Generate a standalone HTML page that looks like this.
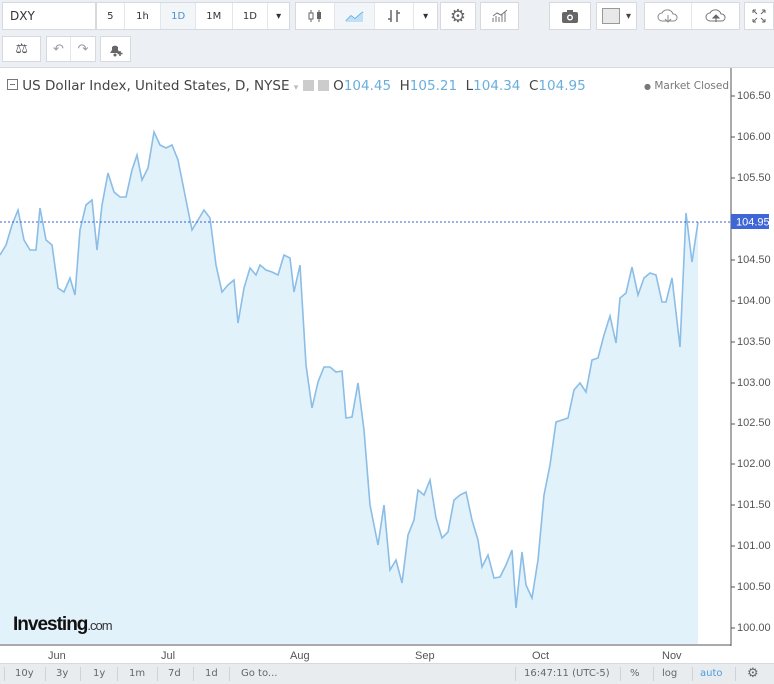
<!DOCTYPE html>
<html><head><meta charset="utf-8"><style>
*{box-sizing:border-box;margin:0;padding:0}
body{width:774px;height:684px;background:#eceff3;font-family:"DejaVu Sans","Liberation Sans",sans-serif;position:relative;overflow:hidden;color:#333}
.b{position:absolute;background:#fff;border:1px solid #d6dadf;display:flex;align-items:center;justify-content:center;font-size:10px;color:#444}
.grp{position:absolute;background:#fff;border:1px solid #d6dadf;display:flex}
.grp div{border-right:1px solid #e3e6ea;display:flex;align-items:center;justify-content:center;font-size:10px;height:100%}
.grp div:last-child{border-right:none}
#panel{position:absolute;left:0;top:67px;width:774px;height:597px;background:#fff;border-top:1px solid #d6dadf}
.lab{position:absolute;left:737px;font-size:11px;color:#555;font-family:"Liberation Sans",sans-serif}
.tl{position:absolute;top:650px;font-size:11px;color:#555;font-family:"Liberation Sans",sans-serif}
#bot{position:absolute;left:0;top:663px;width:774px;height:21px;background:#e9ecef;border-top:1px solid #d6dadf;font-size:10px;color:#666}
#bot span{position:absolute;top:4px}
.sep{position:absolute;top:3px;width:1px;height:14px;background:#cfd3d8}
</style></head><body>
<div class="b" style="left:2px;top:2px;width:94px;height:28px;justify-content:flex-start;padding-left:7px;font-size:12px;color:#333">DXY</div>
<div class="grp" style="left:96px;top:2px;width:194px;height:28px">
<div style="width:28px">5</div><div style="width:37px">1h</div><div style="width:35px;color:#4a90d0;background:#f3f6f9">1D</div><div style="width:37px">1M</div><div style="width:36px">1D</div><div style="width:21px">▾</div></div>
<div class="grp" style="left:295px;top:2px;width:143px;height:28px">
<div style="width:40px"><svg width="16" height="16"><path d="M4 2v12M12 2v12" stroke="#666"/><rect x="2" y="5" width="4" height="6" fill="#fff" stroke="#666"/><rect x="10" y="4" width="4" height="7" fill="#666"/></svg></div>
<div style="width:40px;background:#f3f6f9"><svg width="20" height="14"><path d="M1 12L6 7 10 10 18 3" stroke="#5aaae0" fill="none" stroke-width="1.5"/><path d="M1 12L6 7 10 10 18 3V13H1Z" fill="#bfe0f5"/></svg></div>
<div style="width:40px"><svg width="16" height="16"><path d="M5 2v12M5 11h-3M11 2v12M11 5h3" stroke="#666" stroke-width="1.5"/></svg></div><div style="width:23px">▾</div></div>
<div class="b" style="left:440px;top:2px;width:36px;height:28px;font-size:18px;color:#666">⚙</div>
<div class="b" style="left:480px;top:2px;width:39px;height:28px"><svg width="18" height="14"><path d="M2 13V9M5 13V7M8 13V8M11 13V5M14 13V3M2 7l4-3 4 2 6-5" stroke="#777" fill="none"/></svg></div>
<div class="b" style="left:549px;top:2px;width:42px;height:28px"><svg width="18" height="15"><rect x="1" y="3" width="16" height="11" rx="2" fill="#666"/><rect x="6" y="1" width="6" height="3" fill="#666"/><circle cx="9" cy="8.5" r="3" fill="#fff"/><circle cx="9" cy="8.5" r="1.6" fill="#666"/></svg></div>
<div class="b" style="left:596px;top:2px;width:41px;height:28px;justify-content:flex-start;padding-left:5px"><div style="width:18px;height:16px;background:#e8e8e8;border:1px solid #999"></div><span style="margin-left:6px">▾</span></div>
<div class="grp" style="left:644px;top:2px;width:96px;height:28px">
<div style="width:48px"><svg width="24" height="16"><path d="M6 13a4 4 0 0 1 0-8 6 6 0 0 1 11 1 3.5 3.5 0 0 1 1 7z" fill="none" stroke="#888"/><path d="M12 7v7M9 11l3 3 3-3" stroke="#888" fill="none"/></svg></div>
<div style="width:48px"><svg width="24" height="16"><path d="M6 13a4 4 0 0 1 0-8 6 6 0 0 1 11 1 3.5 3.5 0 0 1 1 7z" fill="none" stroke="#777"/><path d="M12 14V8M9 10l3-3 3 3z" stroke="#666" fill="#666"/></svg></div></div>
<div class="b" style="left:744px;top:2px;width:30px;height:28px"><svg width="14" height="14"><path d="M1 1l4 4M1 1h3M1 1v3M13 1l-4 4M13 1h-3M13 1v3M1 13l4-4M1 13h3M1 13v-3M13 13l-4-4M13 13h-3M13 13v-3" stroke="#666"/></svg></div>
<div class="b" style="left:2px;top:36px;width:39px;height:26px;font-size:14px;color:#555">⚖</div>
<div class="grp" style="left:46px;top:36px;width:50px;height:26px"><div style="width:25px;color:#999;font-size:13px">↶</div><div style="width:25px;color:#999;font-size:13px">↷</div></div>
<div class="b" style="left:100px;top:36px;width:31px;height:26px"><svg width="18" height="16"><path d="M3 12h10l-2-3V6a4 4 0 0 0-6 0v3z" fill="#666"/><circle cx="8" cy="14" r="1.5" fill="#666"/><path d="M13 10v5M10.5 12.5h5" stroke="#666" stroke-width="1.5"/></svg></div>
<div id="panel"></div>
<svg style="position:absolute;left:0;top:68px" width="774" height="596">
<line x1="731" y1="0" x2="731" y2="578" stroke="#555"/>
<line x1="0" y1="577" x2="731" y2="577" stroke="#555"/>
<path d="M0 187L6 177 12 157 18 142 24 172 30 182 36 182 40 140 46 172 52 177 58 220 64 224 70 210 75 227 80 162 86 137 92 132 97 182 102 137 108 105 114 124 120 129 126 129 132 102 137 87 142 112 148 100 154 64 160 77 166 80 172 77 178 92 184 122 192 162 198 152 204 142 210 150 216 197 222 224 228 217 234 212 238 255 244 220 250 200 256 207 260 197 266 202 272 204 278 207 284 187 290 190 294 224 300 197 306 297 312 340 318 314 324 299 330 299 336 304 342 303 346 350 352 349 358 315 364 362 370 437 378 477 384 437 390 502 396 492 402 515 408 467 414 452 418 422 424 427 430 412 436 450 442 470 448 464 454 432 460 427 466 424 472 452 478 472 482 499 488 487 494 510 500 509 506 497 512 482 516 540 522 484 526 517 532 530 538 492 544 427 550 397 556 354 562 352 568 350 574 322 580 315 586 324 592 292 598 290 604 267 610 248 616 275 620 230 626 225 632 199 638 227 644 210 650 205 656 207 662 234 666 234 672 210 680 279 686 145 692 194 698 154V576H0Z" fill="#e1f2fb"/>
<path d="M0 187L6 177 12 157 18 142 24 172 30 182 36 182 40 140 46 172 52 177 58 220 64 224 70 210 75 227 80 162 86 137 92 132 97 182 102 137 108 105 114 124 120 129 126 129 132 102 137 87 142 112 148 100 154 64 160 77 166 80 172 77 178 92 184 122 192 162 198 152 204 142 210 150 216 197 222 224 228 217 234 212 238 255 244 220 250 200 256 207 260 197 266 202 272 204 278 207 284 187 290 190 294 224 300 197 306 297 312 340 318 314 324 299 330 299 336 304 342 303 346 350 352 349 358 315 364 362 370 437 378 477 384 437 390 502 396 492 402 515 408 467 414 452 418 422 424 427 430 412 436 450 442 470 448 464 454 432 460 427 466 424 472 452 478 472 482 499 488 487 494 510 500 509 506 497 512 482 516 540 522 484 526 517 532 530 538 492 544 427 550 397 556 354 562 352 568 350 574 322 580 315 586 324 592 292 598 290 604 267 610 248 616 275 620 230 626 225 632 199 638 227 644 210 650 205 656 207 662 234 666 234 672 210 680 279 686 145 692 194 698 154" fill="none" stroke="#8bbde6" stroke-width="1.6"/>
<line x1="0" y1="154" x2="731" y2="154" stroke="#3a5fcf" stroke-dasharray="2 2"/>
<rect x="731" y="146" width="38" height="15" fill="#3f66d6"/>
<text x="736" y="157.5" font-size="11" fill="#fff" font-family="Liberation Sans,sans-serif">104.95</text>
<g stroke="#555"><line x1="731" y1="28" x2="735" y2="28"/><line x1="731" y1="69" x2="735" y2="69"/><line x1="731" y1="110" x2="735" y2="110"/><line x1="731" y1="192" x2="735" y2="192"/><line x1="731" y1="233" x2="735" y2="233"/><line x1="731" y1="274" x2="735" y2="274"/><line x1="731" y1="315" x2="735" y2="315"/><line x1="731" y1="356" x2="735" y2="356"/><line x1="731" y1="396" x2="735" y2="396"/><line x1="731" y1="437" x2="735" y2="437"/><line x1="731" y1="478" x2="735" y2="478"/><line x1="731" y1="519" x2="735" y2="519"/><line x1="731" y1="560" x2="735" y2="560"/></g>
<text x="13" y="562" font-size="19" font-weight="bold" fill="#111" font-family="Liberation Sans,sans-serif" letter-spacing="-1">Investing<tspan font-size="13" font-weight="normal" fill="#333">.com</tspan></text>
</svg>
<div style="position:absolute;left:7px;top:78px;font-size:13.5px;color:#444;white-space:nowrap"><span style="display:inline-block;width:11px;height:11px;border:1px solid #777;vertical-align:0;position:relative"><span style="position:absolute;left:2px;top:4px;width:5px;height:1px;background:#777"></span></span> US Dollar Index, United States, D, NYSE <span style="color:#bbb;font-size:9px">▾</span> <span style="display:inline-block;width:11px;height:11px;background:#ccc;vertical-align:-1px"></span> <span style="display:inline-block;width:11px;height:11px;background:#ccc;vertical-align:-1px"></span> O<span style="color:#6aaedc">104.45</span>&nbsp; H<span style="color:#6aaedc">105.21</span>&nbsp; L<span style="color:#6aaedc">104.34</span>&nbsp; C<span style="color:#6aaedc">104.95</span></div>
<div style="position:absolute;left:644px;top:80px;font-size:10.5px;color:#777"><span style="font-size:8px">●</span> Market Closed</div>
<div class="lab" style="top:90px">106.50</div><div class="lab" style="top:131px">106.00</div><div class="lab" style="top:172px">105.50</div><div class="lab" style="top:254px">104.50</div><div class="lab" style="top:295px">104.00</div><div class="lab" style="top:336px">103.50</div><div class="lab" style="top:377px">103.00</div><div class="lab" style="top:417px">102.50</div><div class="lab" style="top:458px">102.00</div><div class="lab" style="top:499px">101.50</div><div class="lab" style="top:540px">101.00</div><div class="lab" style="top:581px">100.50</div><div class="lab" style="top:622px">100.00</div>
<div class="tl" style="left:48px">Jun</div><div class="tl" style="left:161px">Jul</div><div class="tl" style="left:290px">Aug</div><div class="tl" style="left:415px">Sep</div><div class="tl" style="left:532px">Oct</div><div class="tl" style="left:662px">Nov</div>
<div id="bot">
<div class="sep" style="left:4px"></div><span style="left:15px">10y</span><div class="sep" style="left:45px"></div><span style="left:56px">3y</span><div class="sep" style="left:80px"></div><span style="left:93px">1y</span><div class="sep" style="left:117px"></div><span style="left:129px">1m</span><div class="sep" style="left:157px"></div><span style="left:168px">7d</span><div class="sep" style="left:193px"></div><span style="left:205px">1d</span><div class="sep" style="left:229px"></div><span style="left:241px">Go to...</span>
<div class="sep" style="left:515px"></div><span style="left:524px">16:47:11 (UTC-5)</span><div class="sep" style="left:620px"></div><span style="left:630px">%</span><div class="sep" style="left:653px"></div><span style="left:662px">log</span><div class="sep" style="left:692px"></div><span style="left:700px;color:#4a9ee0">auto</span><div class="sep" style="left:735px"></div><span style="left:747px;font-size:13px;top:2px">⚙</span>
</div>
</body></html>
